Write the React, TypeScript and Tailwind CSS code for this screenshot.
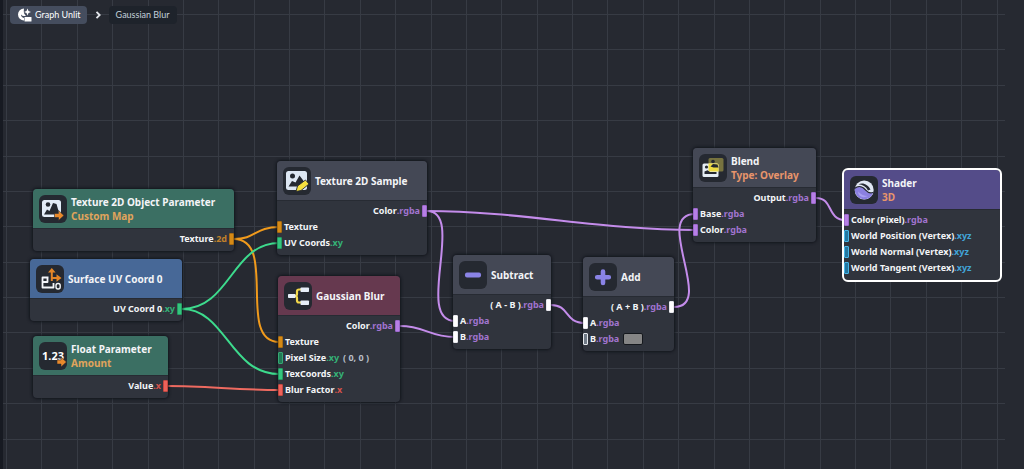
import type { ReactNode } from "react";

type Kind = "tex" | "uv" | "scalar" | "color" | "xyz";

const suffixText: Record<Kind, string> = {
  tex: "text-[#c1812b]",
  uv: "text-[#35b277]",
  scalar: "text-[#d6524b]",
  color: "text-[#a274d0]",
  xyz: "text-[#42a5d8]",
};

interface Port {
  label: string;
  suffix?: string;
  kind: Kind;
  pin: string;
  out?: boolean;
  extra?: ReactNode;
}

interface GraphNode {
  id: string;
  place: string;
  header: string;
  title: string;
  subtitle?: string;
  subtitleColor?: string;
  icon: ReactNode;
  ports: Port[];
  selected?: boolean;
}

const pins = {
  tex: "bg-[#d58a16] border-[#a96c12]",
  uv: "bg-[#34c47e] border-[#249c61]",
  uvOpen: "bg-[#217a55] border-[#35a873]",
  scalar: "bg-[#ee625a] border-[#c34841]",
  color: "bg-[#b67fe6] border-[#9c68cb]",
  white: "bg-white border-[#e8e8ee]",
  grey: "bg-[#717b87] border-[#e4e8ec]",
  xyz: "bg-[#2477a0] border-[#45b4e8]",
};

const orangeArrow = "M0 -2.1h4v-3l5.500 5.100l-5.500 5.100v-3h-4z";

function ObjectIcon() {
  return (
    <svg viewBox="0 0 28 28" className="size-7" aria-hidden="true">
      <rect x="3" y="5" width="19" height="17" rx="2.5" fill="#e3ecf7" />
      <circle cx="9" cy="9.5" r="2.3" fill="#252931" />
      <path d="M5 19.5l3-5 2.5 1.5L14 8l3.5 1 2 7v3.5z" fill="#252931" />
      <path d={orangeArrow} transform="translate(15.5 20.5)" fill="#e9892b" stroke="#252931" strokeWidth="0.6" />
    </svg>
  );
}

function SampleIcon() {
  return (
    <svg viewBox="0 0 28 28" className="size-7" aria-hidden="true">
      <rect x="3" y="4" width="21" height="19" rx="2.5" fill="#dde7f3" />
      <circle cx="9.5" cy="9" r="2.5" fill="#252931" />
      <path d="M5.5 19.500l3.500-5.500 3.500 1.500 4-7 4.500 6-5 5z" fill="#252931" />
      <path d="M13 24.500l1.500-5.500 8-6 3.500 4-8 6.500z" fill="#f5df3f" stroke="#252931" strokeWidth="0.900" />
    </svg>
  );
}

function SurfaceIcon() {
  return (
    <svg viewBox="0 0 28 28" className="size-7" fill="none" aria-hidden="true">
      <path d="M12.500 12.500H6.500v10H17.500v-4.500M6.500 17h5v-4" stroke="#f4f6fa" strokeWidth="1.800" strokeLinejoin="round" />
      <path d="M15.800 16V7M15 13h6" stroke="#e58627" strokeWidth="2" />
      <path d="M12 7.500L15.800 3l3.800 4.500zM20.500 9.200l5 3.800-5 3.800z" fill="#e58627" />
      <rect x="20" y="18.500" width="4.200" height="5.500" rx="2" stroke="#f4f6fa" strokeWidth="1.400" />
    </svg>
  );
}

function FloatIcon() {
  return (
    <span className="relative font-['Noto_Sans'] text-[11px] font-bold leading-7 text-white">
      1.23
      <svg viewBox="0 0 12 12" className="absolute -right-1 bottom-[2px] size-3" aria-hidden="true">
        <path d={orangeArrow} transform="translate(1 6)" fill="#e9892b" stroke="#252931" strokeWidth="0.6" />
      </svg>
    </span>
  );
}

function BranchIcon() {
  return (
    <svg viewBox="0 0 28 28" className="size-7" fill="none" aria-hidden="true">
      <path d="M10.500 14h.5q2 0 2-2v-2.500q0-2 2-2H18M11 14q2 0 2 2v2.500q0 2 2 2H18" stroke="#f2d84a" strokeWidth="2.200" />
      <rect x="4" y="12" width="7.500" height="4" rx="0.800" fill="#e7eef8" />
      <rect x="16.500" y="5.500" width="8.500" height="4.500" rx="0.800" fill="#e7eef8" />
      <rect x="16.500" y="18.500" width="8.500" height="4.500" rx="0.800" fill="#e7eef8" />
    </svg>
  );
}

function MinusIcon() {
  return (
    <svg viewBox="0 0 28 28" className="size-7" aria-hidden="true">
      <rect x="6" y="11.500" width="16" height="5" rx="2" fill="#8a83e6" />
    </svg>
  );
}

function PlusIcon() {
  return (
    <svg viewBox="0 0 28 28" className="size-7" aria-hidden="true">
      <path d="M14 8.500v11.500M8.200 14.200h11.600" stroke="#8a83e6" strokeWidth="4.600" strokeLinecap="round" />
    </svg>
  );
}

function BlendIcon() {
  return (
    <svg viewBox="0 0 28 28" className="size-7" aria-hidden="true">
      <rect x="9.500" y="4" width="15" height="13.500" rx="1.500" fill="#77733f" />
      <circle cx="14" cy="7.500" r="1.800" fill="#252931" />
      <rect x="3.500" y="9.500" width="16" height="13.500" rx="1.500" fill="#e5edf5" />
      <path d="M9.500 9.500H18q1.500 0 1.500 1.500v6.500H9.500z" fill="#efdc42" />
      <path d="M5.500 20v-2.500l3-1.200 2.500 1.700 6.500 0v2z" fill="#252931" />
      <path d="M11.500 12.500l2.500-2.500 4.500.5 1 3h-5z" fill="#252931" />
      <circle cx="7.500" cy="13" r="1.600" fill="#252931" />
    </svg>
  );
}

function ShaderIcon() {
  return (
    <svg viewBox="0 0 28 28" className="size-7" aria-hidden="true">
      <circle cx="14.200" cy="14" r="9.500" fill="#e1e8f4" />
      <path d="M4.800 12.500C9 9 13.500 11.500 16 14.500S21 17.500 23.300 16.500A9.500 9.500 0 0 1 4.800 12.500z" fill="#8b80e0" />
      <path d="M4.800 12.300C9 8.800 13.500 11.300 16 14.300S21 17.300 23.500 16.200" fill="none" stroke="#252931" strokeWidth="1.200" />
      <path d="M8.500 8.300C13 6 18 8.500 20.500 13.500l-2.500 1C16 10.500 12.500 8.500 8.500 8.300z" fill="#252931" />
      <path d="M8 15.500q4.500 4.500 10 4.500-5 2.500-8.500-.5-1.500-1.500-1.500-4z" fill="#a89ff0" />
    </svg>
  );
}

const neutral = "bg-[#444855]";
const green = "bg-[#3b6f63]";

const nodes: GraphNode[] = [
  {
    id: "object", place: "left-[33px] top-[189px] w-[201px]", header: green,
    title: "Texture 2D Object Parameter", subtitle: "Custom Map", subtitleColor: "text-[#e0a45c]", icon: <ObjectIcon />,
    ports: [{ label: "Texture", suffix: ".2d", kind: "tex", pin: pins.tex, out: true }],
  },
  {
    id: "surface", place: "left-[30px] top-[259px] w-[152px]", header: "bg-[#476897]",
    title: "Surface UV Coord 0", icon: <SurfaceIcon />,
    ports: [{ label: "UV Coord 0", suffix: ".xy", kind: "uv", pin: pins.uv, out: true }],
  },
  {
    id: "float", place: "left-[33px] top-[336px] w-[135px]", header: green,
    title: "Float Parameter", subtitle: "Amount", subtitleColor: "text-[#e0a45c]", icon: <FloatIcon />,
    ports: [{ label: "Value", suffix: ".x", kind: "scalar", pin: pins.scalar, out: true }],
  },
  {
    id: "sample", place: "left-[277px] top-[161px] w-[150px]", header: neutral,
    title: "Texture 2D Sample", icon: <SampleIcon />,
    ports: [
      { label: "Color", suffix: ".rgba", kind: "color", pin: pins.color, out: true },
      { label: "Texture", kind: "tex", pin: pins.tex },
      { label: "UV Coords", suffix: ".xy", kind: "uv", pin: pins.uv },
    ],
  },
  {
    id: "gaussian", place: "left-[278px] top-[276px] w-[122px]", header: "bg-[#66394f]",
    title: "Gaussian Blur", icon: <BranchIcon />,
    ports: [
      { label: "Color", suffix: ".rgba", kind: "color", pin: pins.color, out: true },
      { label: "Texture", kind: "tex", pin: pins.tex },
      { label: "Pixel Size", suffix: ".xy", kind: "uv", pin: pins.uvOpen, extra: <span className="ml-1 text-[#b9bec8]">( 0, 0 )</span> },
      { label: "TexCoords", suffix: ".xy", kind: "uv", pin: pins.uv },
      { label: "Blur Factor", suffix: ".x", kind: "scalar", pin: pins.scalar },
    ],
  },
  {
    id: "subtract", place: "left-[453px] top-[255px] w-[98px]", header: neutral,
    title: "Subtract", icon: <MinusIcon />,
    ports: [
      { label: "( A - B )", suffix: ".rgba", kind: "color", pin: pins.white, out: true },
      { label: "A", suffix: ".rgba", kind: "color", pin: pins.white },
      { label: "B", suffix: ".rgba", kind: "color", pin: pins.white },
    ],
  },
  {
    id: "add", place: "left-[583px] top-[257px] w-[91px]", header: neutral,
    title: "Add", icon: <PlusIcon />,
    ports: [
      { label: "( A + B )", suffix: ".rgba", kind: "color", pin: pins.white, out: true },
      { label: "A", suffix: ".rgba", kind: "color", pin: pins.white },
      {
        label: "B", suffix: ".rgba", kind: "color", pin: pins.grey,
        extra: <button type="button" aria-label="B color" className="ml-1 h-3 w-5 rounded-xs border border-[#15181d] bg-[#858585]" />,
      },
    ],
  },
  {
    id: "blend", place: "left-[693px] top-[148px] w-[123px]", header: neutral,
    title: "Blend", subtitle: "Type: Overlay", subtitleColor: "text-[#e8956b]", icon: <BlendIcon />,
    ports: [
      { label: "Output", suffix: ".rgba", kind: "color", pin: pins.color, out: true },
      { label: "Base", suffix: ".rgba", kind: "color", pin: pins.color },
      { label: "Color", suffix: ".rgba", kind: "color", pin: pins.color },
    ],
  },
  {
    id: "shader", place: "left-[844px] top-[170px] w-[156px]", header: "bg-[#544c89]",
    title: "Shader", subtitle: "3D", subtitleColor: "text-[#e8956b]", icon: <ShaderIcon />, selected: true,
    ports: [
      { label: "Color (Pixel)", suffix: ".rgba", kind: "color", pin: pins.color },
      { label: "World Position (Vertex)", suffix: ".xyz", kind: "xyz", pin: pins.xyz },
      { label: "World Normal (Vertex)", suffix: ".xyz", kind: "xyz", pin: pins.xyz },
      { label: "World Tangent (Vertex)", suffix: ".xyz", kind: "xyz", pin: pins.xyz },
    ],
  },
];

const wires = [
  { d: "M234 239C256 239 255 227 279 227", color: "#f09a1c" },
  { d: "M234 239C278 239 236 342 279 342", color: "#f09a1c" },
  { d: "M182 309C230 309 232 243 279 243", color: "#3ddb8d" },
  { d: "M182 309C226 309 230 374 279 374", color: "#3ddb8d" },
  { d: "M168 386C206 386 238 390 279 390", color: "#ee6a60" },
  { d: "M427 211C520 211 600 230 695 230", color: "#c48ceb" },
  { d: "M427 211C466 211 414 321 455 321", color: "#c48ceb" },
  { d: "M400 326C425 326 429 337 455 337", color: "#c48ceb" },
  { d: "M551 305C570 305 564 323 585 323", color: "#c48ceb" },
  { d: "M674 307C716 307 652 214 695 214", color: "#c48ceb" },
  { d: "M816 198C834 198 826 220 846 220", color: "#c48ceb" },
];

const steps = Array.from({ length: 120 }, (_, i) => i);

function Grid() {
  return (
    <svg className="absolute inset-y-0 left-0 h-full w-[calc(100%-19px)]" shapeRendering="crispEdges" stroke="#373b44" aria-hidden="true">
      {steps.map((i) => {
        const x = Math.round(3 + i * 35.375) + 0.5;
        return <line key={`v${i}`} x1={x} x2={x} y1="0" y2="100%" />;
      })}
      {steps.map((i) => {
        const y = Math.round(14 + i * 35.375) + 0.5;
        return <line key={`h${i}`} x1="0" x2="100%" y1={y} y2={y} />;
      })}
    </svg>
  );
}

function PortRow({ port }: { port: Port }) {
  return (
    <li className={`flex h-4 items-center gap-[2px] ${port.out ? "flex-row-reverse" : ""}`}>
      <span className={`h-3 w-[5px] shrink-0 rounded-[1px] border ${port.pin}`} />
      <span className="flex items-center whitespace-pre">
        <span>{port.label}</span>
        <span className={suffixText[port.kind]}>{port.suffix}</span>
        {port.extra}
      </span>
    </li>
  );
}

function NodeCard({ node }: { node: GraphNode }) {
  const frame = node.selected
    ? "outline-2 outline-white rounded-sm"
    : "rounded-sm shadow-[0_0_3px_1px_rgba(16,19,25,0.9)]";
  return (
    <article className={`absolute overflow-hidden bg-[#30343d] ${frame} ${node.place}`}>
      <header className={`flex h-10 items-center gap-1 border-b border-[#272b33] pl-[6px] ${node.header}`}>
        <span className="flex size-7 shrink-0 items-center justify-center rounded-md bg-[#252931]">{node.icon}</span>
        <div className="whitespace-nowrap text-[10px] leading-[14px]">
          <h2>{node.title}</h2>
          {node.subtitle && <p className={node.subtitleColor}>{node.subtitle}</p>}
        </div>
      </header>
      <ul className="pb-1 pt-[2px] text-[9px] leading-4">
        {node.ports.map((port, i) => (
          <PortRow key={i} port={port} />
        ))}
      </ul>
    </article>
  );
}

export default function App() {
  return (
    <main className="relative min-h-screen w-full overflow-hidden border-l-3 border-[#171a22] bg-[#262931] font-['Noto_Sans',sans-serif] font-bold text-[#f3f4f7]">
      <Grid />
      <nav className="relative flex items-center pl-[7px] pt-[6px] font-['Lato',sans-serif] text-[9px] font-normal leading-[18px]">
        <a href="#graph" className="flex h-[18px] items-center gap-[3px] rounded-sm bg-[#454d5e] px-[6px] text-white">
          <svg viewBox="0 0 16 16" className="size-4" aria-hidden="true">
            <path d="M8 1.500A6 6 0 1 0 8 13.500V11Q5 10 5 7.500Q7 10 10 8.500Q7 7 8 1.500z" fill="#fff" />
            <path d="M11.500 1.500l1 2.500 2.500 1-2.500 1-1 2.500-1-2.500-2.500-1 2.500-1z" fill="#fff" />
            <rect x="8.500" y="10" width="7" height="4.500" rx="0.500" fill="#fff" />
          </svg>
          Graph Unlit
        </a>
        <svg viewBox="0 0 6 8" className="mx-2 h-2 w-[6px]" fill="none" stroke="#e4e7ec" strokeWidth="1.800" aria-hidden="true">
          <path d="M1.500 0.800L4.700 4L1.500 7.200" />
        </svg>
        <a href="#gaussian-blur" className="flex h-[18px] items-center rounded-sm bg-[#1e232b] px-[7px] text-[#c3d0da]">Gaussian Blur</a>
      </nav>
      <div className="absolute inset-y-0 -left-[3px] right-0">
        <svg className="absolute inset-0 size-full" fill="none" strokeWidth="2" aria-hidden="true">
          {wires.map((wire) => (
            <path key={wire.d} d={wire.d} stroke={wire.color} />
          ))}
        </svg>
        {nodes.map((node) => (
          <NodeCard key={node.id} node={node} />
        ))}
      </div>
    </main>
  );
}
